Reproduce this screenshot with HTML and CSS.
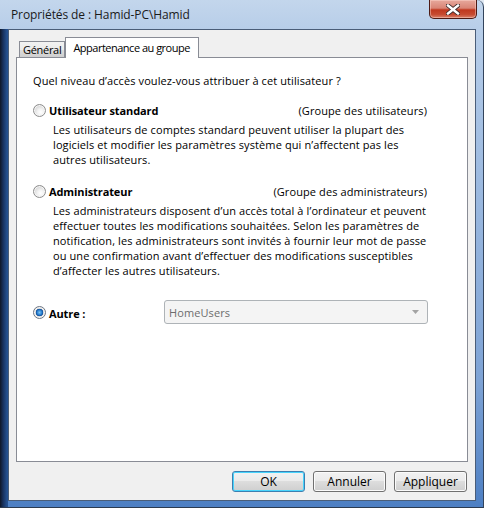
FILE: index.html
```html
<!DOCTYPE html>
<html lang="fr">
<head>
<meta charset="utf-8">
<title>Propriétés de : Hamid-PC\Hamid</title>
<link rel="stylesheet" href="styles.css">
</head>
<body>
<div class="window">
  <div class="titlebar">
    <span class="title">Propriétés de : Hamid-PC\Hamid</span>
    <div class="close">
      <svg width="14" height="11" viewBox="0 0 14 11">
        <path d="M2 1.5 L12 9.5 M12 1.5 L2 9.5" stroke="#3b2a2a" stroke-width="4.2" stroke-linecap="square" fill="none"/>
        <path d="M2 1.5 L12 9.5 M12 1.5 L2 9.5" stroke="#ffffff" stroke-width="2.4" stroke-linecap="square" fill="none"/>
      </svg>
    </div>
  </div>
  <div class="client">
    <div class="tabs">
      <div class="tab">Général</div>
      <div class="tab active">Appartenance au groupe</div>
    </div>
    <div class="panel">
      <p class="question">Quel niveau d’accès voulez-vous attribuer à cet utilisateur ?</p>

      <div class="option">
        <div class="opt-head">
          <span class="radio"></span>
          <span class="label">Utilisateur standard</span>
          <span class="group">(Groupe des utilisateurs)</span>
        </div>
        <p class="desc">Les utilisateurs de comptes standard peuvent utiliser la plupart des<br>logiciels et modifier les paramètres système qui n’affectent pas les<br>autres utilisateurs.</p>
      </div>

      <div class="option admin">
        <div class="opt-head">
          <span class="radio"></span>
          <span class="label">Administrateur</span>
          <span class="group">(Groupe des administrateurs)</span>
        </div>
        <p class="desc">Les administrateurs disposent d’un accès total à l’ordinateur et peuvent<br>effectuer toutes les modifications souhaitées. Selon les paramètres de<br>notification, les administrateurs sont invités à fournir leur mot de passe<br>ou une confirmation avant d’effectuer des modifications susceptibles<br>d’affecter les autres utilisateurs.</p>
      </div>

      <div class="other">
        <span class="radio checked"></span>
        <span class="label">Autre :</span>
        <div class="combo">
          <span>HomeUsers</span>
          <svg width="7" height="4" viewBox="0 0 7 4"><path d="M0 0 H7 L3.5 4 Z" fill="#a3a3a3"/></svg>
        </div>
      </div>
    </div>
    <div class="buttons">
      <div class="btn default">OK</div>
      <div class="btn">Annuler</div>
      <div class="btn">Appliquer</div>
    </div>
  </div>
</div>
</body>
</html>
```
FILE: styles.css
```css
html, body {
  margin: 0;
  padding: 0;
  background: #dfe8f3;
}
body {
  font-family: "Open Sans", "Noto Sans", sans-serif;
  font-size: 11px;
  letter-spacing: 0.1px;
  color: #000;
}
.window {
  width: 484px;
  height: 508px;
  box-sizing: border-box;
  display: flex;
  flex-direction: column;
  border-right: 1px solid #33445c;
  border-bottom: 1px solid #2b3a50;
  border-radius: 0 7px 0 0;
  background:
    linear-gradient(to right, #0e1626 0, #17305c 3px, #24508f 7px) no-repeat 0 29px / 8px 100%,
    linear-gradient(to bottom, #c3d6ec 0, #b8cee9 28px, #a6c1e3 120px, #7ea3d5 380px, #4d7fc3 100%);
}
.titlebar {
  height: 29px;
  display: flex;
  align-items: flex-start;
  padding: 0 6px 0 11px;
}
.title {
  margin-top: 6px;
  font-size: 12px;
  color: #1a1a1a;
  letter-spacing: -0.1px;
}
.close {
  margin-left: auto;
  width: 46px;
  height: 18px;
  border: 1px solid #4d1a14;
  border-top: none;
  border-radius: 0 0 5px 5px;
  background: linear-gradient(to bottom, #e7a89c 0, #d98576 45%, #c0381f 55%, #c64a30 80%, #d9806a 100%);
  display: flex;
  align-items: center;
  justify-content: center;
  box-shadow: inset 0 0 0 1px rgba(255,220,210,0.45);
}
.client {
  flex: 1;
  margin: 0 7px 6px 8px;
  border: 1px solid #4a5d78;
  background: #f0f0f0;
  display: flex;
  flex-direction: column;
  padding: 7px 7px 8px 7px;
}
.tabs {
  display: flex;
  align-items: flex-end;
  height: 20px;
  padding-left: 3px;
  position: relative;
  z-index: 1;
}
.tab {
  height: 14px;
  padding: 1px 3px 0 3px;
  border: 1px solid #898c95;
  border-bottom: none;
  background: linear-gradient(to bottom, #f2f2f2 0, #ebebeb 50%, #dddddd 51%, #cfcfcf 100%);
  font-size: 11px;
  letter-spacing: -0.3px;
  line-height: 14px;
}
.tab.active {
  height: 20px;
  margin-bottom: -1px;
  padding: 0 8px 0 7px;
  background: #ffffff;
  letter-spacing: -0.5px;
  line-height: 19px;
}
.panel {
  flex: 1;
  background: #fff;
  border: 1px solid #898c95;
  padding: 15px 40px 0 16px;
  line-height: 15px;
}
.panel p {
  margin: 0;
}
.question {
  margin-bottom: 15px !important;
}
.opt-head {
  display: flex;
  align-items: center;
  height: 15px;
}
.radio {
  width: 11px;
  height: 11px;
  border-radius: 50%;
  border: 1px solid #8d8d8d;
  background: radial-gradient(circle at 60% 65%, #ffffff 0, #f4f4f4 30%, #d6d6d6 70%, #cfcfcf 100%);
  margin-right: 3px;
  box-shadow: inset 0 0 0 1px #f6f6f6;
  flex: none;
}
.radio.checked {
  background: radial-gradient(circle at 50% 50%, #7ac4f2 0, #2a7fd0 30%, #0f4f9a 45%, #dcdcdc 52%, #f2f2f2 100%);
  border-color: #6e7683;
}
.label {
  font-weight: bold;
  letter-spacing: -0.1px;
}
.group {
  margin-left: auto;
}
.desc {
  margin: 4px 0 0 20px !important;
  white-space: nowrap;
}
.admin {
  margin-top: 17px;
}
.other {
  display: flex;
  align-items: center;
  margin-top: 22px;
}
.other .label {
  position: relative;
  top: 1px;
}
.combo {
  margin-left: auto;
  width: 264px;
  height: 24px;
  border: 1px solid #aeb3b7;
  border-radius: 3px;
  background: #f4f4f4;
  color: #6d6d6d;
  display: flex;
  align-items: center;
  justify-content: space-between;
  padding: 0 8px 0 4px;
  box-sizing: border-box;
  margin-right: -1px;
}
.buttons {
  display: flex;
  justify-content: flex-end;
  gap: 8px;
  margin-top: 9px;
  padding-right: 1px;
}
.btn {
  width: 73px;
  height: 21px;
  box-sizing: border-box;
  border: 1px solid #707070;
  border-radius: 3px;
  background: linear-gradient(to bottom, #f2f2f2 0, #ebebeb 45%, #dddddd 50%, #cfcfcf 100%);
  box-shadow: inset 0 0 0 1px #fbfbfb;
  display: flex;
  align-items: center;
  justify-content: center;
  font-size: 12px;
  letter-spacing: 0;
}
.btn.default {
  border-color: #3c7fb1;
  box-shadow: inset 0 0 0 1px #48d4fc;
}
```
